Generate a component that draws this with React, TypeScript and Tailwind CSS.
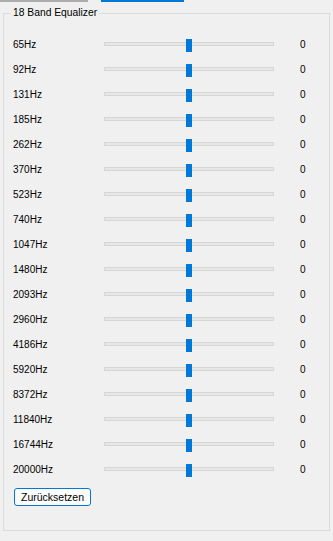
const bands = [
  "65Hz", "92Hz", "131Hz", "185Hz", "262Hz", "370Hz", "523Hz", "740Hz", "1047Hz",
  "1480Hz", "2093Hz", "2960Hz", "4186Hz", "5920Hz", "8372Hz", "11840Hz", "16744Hz", "20000Hz",
]

function Slider() {
  return (
    <div className="relative flex items-center w-[170px] h-[25px]">
      <div className="w-full h-[4px] -mt-[1px] border border-[#d6d6d6] bg-[#e7e7e7]" />
      <div className="absolute top-[7px] left-[82px] w-[6px] h-[13px] bg-[#0078d7]" />
    </div>
  )
}

export default function App() {
  return (
    <div
      className="w-[333px] h-[541px] bg-[#f0f0f0] text-[10px] text-black overflow-hidden"
      style={{ fontFamily: '"Liberation Sans", Arial, sans-serif' }}
    >
      {/* Reste der Tabs oben */}
      <div className="flex h-[2px]">
        <div className="w-[88px] bg-[#adadad]" />
        <div className="ml-[13px] w-[83px] bg-[#0078d7]" />
      </div>

      <fieldset className="mx-[3px] mt-[5px] h-[524px] border border-[#dcdcdc] pl-[9px]">
        <legend className="-ml-[2px] px-[2px] leading-[12px] text-[10.3px]">18 Band Equalizer</legend>
        <div className="pt-[13px]">
          {bands.map((b) => (
            <div key={b} className="flex items-center h-[25px]">
              <div className="w-[91px]">{b}</div>
              <Slider />
              <div className="ml-[26px]">0</div>
            </div>
          ))}
        </div>
        <button className="mt-[6px] ml-[1px] w-[77px] h-[18px] flex items-center justify-center rounded-[3px] border border-[#0078d7] bg-[#fdfdfd] text-[10.5px] leading-none">
          Zurücksetzen
        </button>
      </fieldset>
    </div>
  )
}
